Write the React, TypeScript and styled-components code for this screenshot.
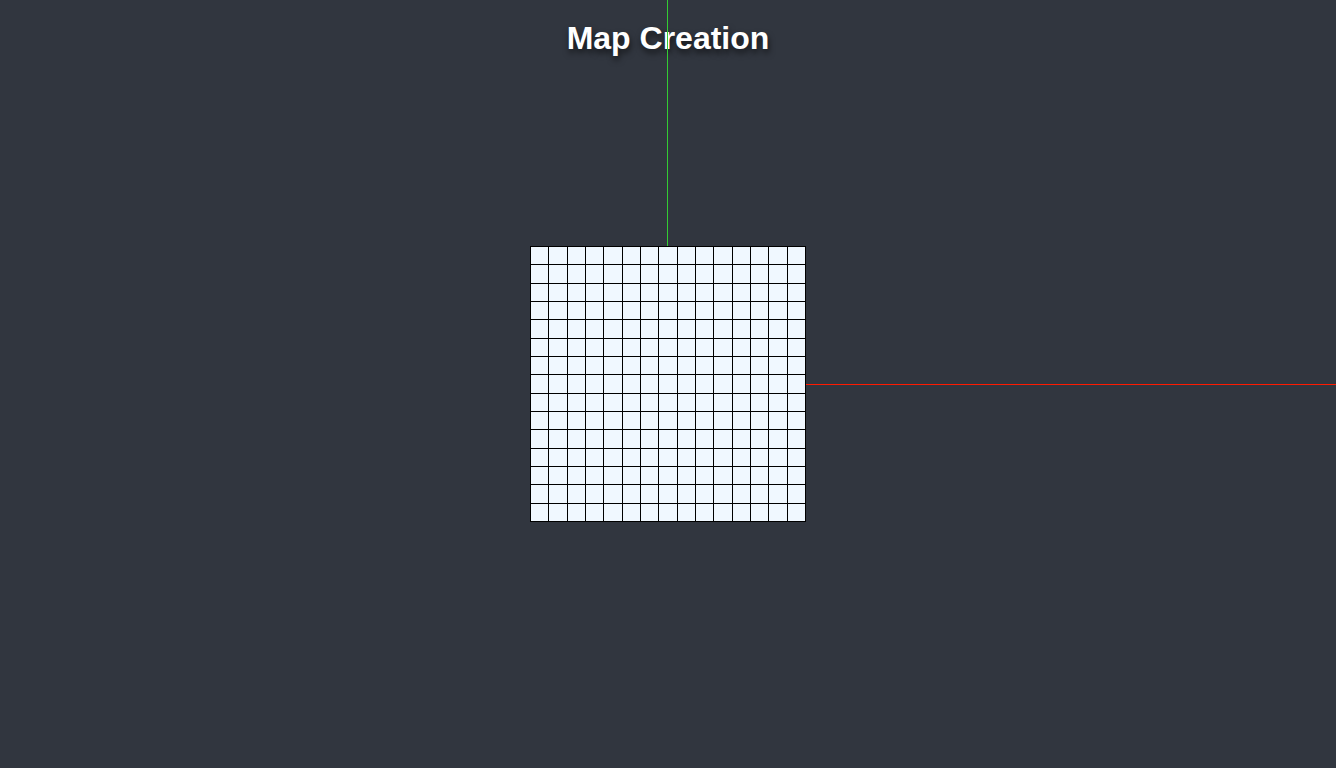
import styled, { createGlobalStyle } from "styled-components";

const CELLS = 15;
const GRID_SIZE = 276;

const GlobalStyle = createGlobalStyle`
  html, body {
    margin: 0;
    padding: 0;
    background: #31363f;
    font-family: 'Liberation Sans', Arial, sans-serif;
    overflow: hidden;
  }
`

const Page = styled.main`
  position: relative;
  height: 100vh;
  display: grid;
  grid-template-columns: 1fr ${GRID_SIZE}px 1fr;
  grid-template-rows: 1fr ${GRID_SIZE}px 1fr;
  background: #31363f;
`

const Title = styled.h1`
  position: absolute;
  top: 20px;
  left: 0;
  right: 0;
  margin: 0;
  text-align: center;
  font-size: 32px;
  font-weight: bold;
  color: #ffffff;
  text-shadow: 1px 4px 6px rgba(0, 0, 0, 0.6);
  z-index: 1;
`

const VerticalGuide = styled.div`
  grid-column: 2;
  grid-row: 1;
  width: 1px;
  margin-left: ${GRID_SIZE / 2 - 1}px;
  background: #33cc33;
  position: relative;
  z-index: 2;
`

const HorizontalGuide = styled.div`
  grid-column: 3;
  grid-row: 2;
  align-self: start;
  height: 1px;
  margin-top: ${GRID_SIZE / 2}px;
  background: #ff1a00;
`

const Board = styled.div`
  grid-column: 2;
  grid-row: 2;
  box-sizing: border-box;
  display: grid;
  grid-template-columns: repeat(${CELLS}, 1fr);
  grid-template-rows: repeat(${CELLS}, 1fr);
  border-top: 1px solid #000;
  border-left: 1px solid #000;
`

const Cell = styled.div`
  background: #f0f8ff;
  border-right: 1px solid #000;
  border-bottom: 1px solid #000;
`

export default function App() {
  const cells = Array.from({ length: CELLS * CELLS }, (_, i) => i);
  return (
    <>
      <GlobalStyle />
      <Page>
        <Title>Map Creation</Title>
        <VerticalGuide />
        <Board>
          {cells.map((i) => (
            <Cell key={i} />
          ))}
        </Board>
        <HorizontalGuide />
      </Page>
    </>
  );
}
